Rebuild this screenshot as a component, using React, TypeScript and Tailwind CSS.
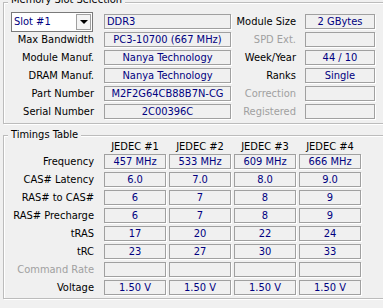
import React from "react";

const NAVY = "text-[#000080]";

function Box({ children, w, align = "center", className = "" }: { children?: React.ReactNode; w: string; align?: "center" | "left"; className?: string }) {
  return (
    <div
      className={`${w} h-[15px] border border-[#a0a0a0] shadow-[1px_1px_0_#ffffff] flex items-center ${align === "center" ? "justify-center" : "justify-start pl-[2px]"} ${NAVY} leading-none whitespace-nowrap overflow-hidden ${className}`}
    >
      {children}
    </div>
  );
}

function Label({ children, w, disabled = false }: { children: React.ReactNode; w: string; disabled?: boolean }) {
  return (
    <div className={`${w} text-right leading-none whitespace-nowrap ${disabled ? "text-[#a0a0a0]" : "text-black"}`}>{children}</div>
  );
}

function Group({ title, className, titleTop, children }: { title: string; className: string; titleTop: string; children: React.ReactNode }) {
  return (
    <div className={`relative ml-[3px] w-[392px] border border-[#bcbcbc] shadow-[inset_1px_1px_0_#ffffff,1px_1px_0_#ffffff] ${className}`}>
      <div className={`absolute left-[4px] ${titleTop} bg-[#f0f0f0] px-[3px] leading-[14px] text-black whitespace-nowrap`}>{title}</div>
      {children}
    </div>
  );
}

const topRows: [string, string, string, string, boolean][] = [
  ["Max Bandwidth", "PC3-10700 (667 MHz)", "SPD Ext.", "", true],
  ["Module Manuf.", "Nanya Technology", "Week/Year", "44 / 10", false],
  ["DRAM Manuf.", "Nanya Technology", "Ranks", "Single", false],
  ["Part Number", "M2F2G64CB88B7N-CG", "Correction", "", true],
  ["Serial Number", "2C00396C", "Registered", "", true],
];

const timingRows: [string, string[], boolean][] = [
  ["Frequency", ["457 MHz", "533 MHz", "609 MHz", "666 MHz"], false],
  ["CAS# Latency", ["6.0", "7.0", "8.0", "9.0"], false],
  ["RAS# to CAS#", ["6", "7", "8", "9"], false],
  ["RAS# Precharge", ["6", "7", "8", "9"], false],
  ["tRAS", ["17", "20", "22", "24"], false],
  ["tRC", ["23", "27", "30", "33"], false],
  ["Command Rate", ["", "", "", ""], true],
  ["Voltage", ["1.50 V", "1.50 V", "1.50 V", "1.50 V"], false],
];

export default function App() {
  return (
    <div
      className="w-[383px] h-[308px] overflow-hidden bg-[#f0f0f0] text-[11px] pt-[2px]"
      style={{ fontFamily: '"DejaVu Sans Condensed", "Liberation Sans", sans-serif' }}
    >
      <Group title="Memory Slot Selection" titleTop="top-[-10px]" className="h-[122px] pt-[8px]">
        <div className="flex items-center h-[21px]">
          <div className="w-[90px] flex justify-end">
            <div className="w-[82px] h-[20px] mr-[1px] bg-white border border-[#7a7a7a] flex items-stretch">
              <div className="flex-1 flex items-center pl-[2px] text-[#000080] leading-none">Slot #1</div>
              <div className="w-[15px] m-[1px] border border-[#a0a0a0] bg-[#f4f4f4] flex items-center justify-center">
                <div className="w-0 h-0 border-l-[4px] border-r-[4px] border-t-[4px] border-l-transparent border-r-transparent border-t-black" />
              </div>
            </div>
          </div>
          <div className="ml-[10px]">
            <Box w="w-[127px]" align="left">DDR3</Box>
          </div>
          <Label w="w-[65px]">Module Size</Label>
          <div className="ml-[9px]">
            <Box w="w-[70px]">2 GBytes</Box>
          </div>
        </div>
        {topRows.map(([l, v, rl, rv, dis]) => (
          <div key={l} className="flex items-start h-[18px]">
            <div className="h-[15px] flex items-center">
              <Label w="w-[90px]">{l}</Label>
            </div>
            <div className="ml-[10px]">
              <Box w="w-[127px]">{v}</Box>
            </div>
            <div className="h-[15px] flex items-center">
              <Label w="w-[65px]" disabled={dis}>{rl}</Label>
            </div>
            <div className="ml-[9px]">
              <Box w="w-[70px]">{rv}</Box>
            </div>
          </div>
        ))}
      </Group>
      <Group title="Timings Table" titleTop="top-[-8px]" className="mt-[11px] h-[164px] pt-[2px]">
        <div className="flex items-center h-[16px]">
          <div className="w-[90px]" />
          <div className="ml-[10px] flex gap-[3px]">
            {["JEDEC #1", "JEDEC #2", "JEDEC #3", "JEDEC #4"].map((h) => (
              <div key={h} className="w-[62px] text-center leading-none text-black">{h}</div>
            ))}
          </div>
        </div>
        {timingRows.map(([l, vals, dis]) => (
          <div key={l} className="flex items-start h-[18px]">
            <div className="h-[15px] flex items-center">
              <Label w="w-[90px]" disabled={dis}>{l}</Label>
            </div>
            <div className="ml-[10px] flex gap-[3px]">
              {vals.map((v, i) => (
                <Box key={i} w="w-[62px]">{v}</Box>
              ))}
            </div>
          </div>
        ))}
      </Group>
    </div>
  );
}
